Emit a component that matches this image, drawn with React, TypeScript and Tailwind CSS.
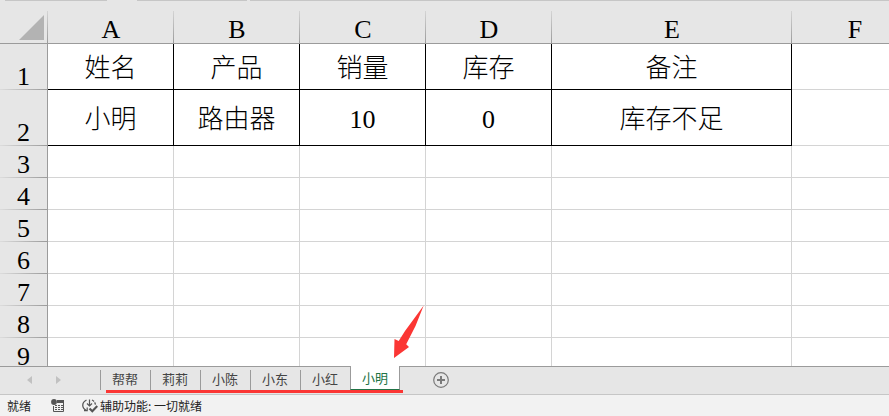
import { useState } from "react";
import clsx from "clsx";

const columns = ["A", "B", "C", "D", "E", "F"];
const sheets = ["帮帮", "莉莉", "小陈", "小东", "小红", "小明"];

const rows = [
  ["姓名", "产品", "销量", "库存", "备注"],
  ["小明", "路由器", "10", "0", "库存不足"],
  [],
  [],
  [],
  [],
  [],
  [],
  [],
];

const rowHeight = (index: number) => {
  if (index === 0) return "h-[46px]";
  if (index === 1) return "h-14";
  return "h-8";
};

function SheetGrid() {
  return (
    <div className="min-h-0 flex-1 overflow-hidden bg-white">
      <table className="w-full table-fixed border-separate border-spacing-0 font-['Liberation_Serif','Noto_Sans_CJK_SC',serif] text-[26px] leading-[26px] font-light text-black">
        <colgroup>
          <col className="w-12" />
          <col className="w-[126px]" />
          <col className="w-[126px]" />
          <col className="w-[126px]" />
          <col className="w-[126px]" />
          <col className="w-60" />
          <col />
        </colgroup>
        <thead>
          <tr className="h-[43px] bg-[#e6e6e6]">
            <th className="border-b border-[#9b9b9b] bg-[linear-gradient(to_bottom,#d4d4d4,#9b9b9b)] bg-[length:1px_32px] bg-right-bottom bg-no-repeat p-0 align-bottom">
              <button
                type="button"
                aria-label="全选"
                className="ml-auto block pr-1 pb-[3px]"
              >
                <svg width="25" height="25" viewBox="0 0 25 25" fill="#b3b3b3">
                  <path d="M25 0V25H0Z" />
                </svg>
              </button>
            </th>
            {columns.map((col) => (
              <th
                key={col}
                scope="col"
                className={clsx(
                  "border-b border-[#9b9b9b] p-0 align-bottom font-light",
                  col === "F"
                    ? "text-center"
                    : "bg-[linear-gradient(to_bottom,#d4d4d4,#9b9b9b)] bg-[length:1px_32px] bg-right-bottom bg-no-repeat"
                )}
              >
                {col === "F" ? <div className="w-[126px]">{col}</div> : col}
              </th>
            ))}
          </tr>
        </thead>
        <tbody>
          {rows.map((row, i) => (
            <tr key={i} className={rowHeight(i)}>
              <th
                scope="row"
                className="border-r border-[#9b9b9b] bg-[#e6e6e6] bg-[linear-gradient(to_right,#dcdcdc,#9b9b9b)] bg-[length:100%_1px] bg-bottom bg-no-repeat p-0 align-bottom font-light"
              >
                {i + 1}
              </th>
              {columns.map((col, j) => (
                <td
                  key={col}
                  className={clsx(
                    "border-b px-0 pt-1 pb-0 text-center align-middle",
                    col !== "F" && "border-r",
                    row[j] ? "border-black" : "border-[#d4d4d4]"
                  )}
                >
                  {row[j]}
                </td>
              ))}
            </tr>
          ))}
        </tbody>
      </table>
    </div>
  );
}

function SheetTabs() {
  const [active, setActive] = useState("小明");

  return (
    <div className="relative flex h-[29px] shrink-0 border-b border-[#c6c6c6] bg-[#e6e6e6]">
      <div className="flex w-[100px] items-center gap-6 border-t border-[#9b9b9b] pb-0.5 pl-[27px]">
        <button type="button" aria-label="上一个工作表">
          <svg width="5" height="8" viewBox="0 0 5 8" fill="#c1c1c1">
            <path d="M5 0V8L0 4Z" />
          </svg>
        </button>
        <button type="button" aria-label="下一个工作表">
          <svg width="5" height="8" viewBox="0 0 5 8" fill="#c1c1c1">
            <path d="M0 0V8L5 4Z" />
          </svg>
        </button>
      </div>

      <div role="tablist" className="relative flex text-[13px]">
        {sheets.map((name) => (
          <button
            key={name}
            type="button"
            role="tab"
            aria-selected={name === active}
            onClick={() => setActive(name)}
            className={clsx(
              "h-6 w-[50px]",
              name === active
                ? "border-x border-b border-x-[#9b9b9b] border-b-[#217346] bg-white text-[#217346]"
                : "border-t border-[#9b9b9b] bg-[linear-gradient(#9b9b9b,#9b9b9b)] bg-[length:1px_20px] bg-left-bottom bg-no-repeat text-[#444444]"
            )}
          >
            {name}
          </button>
        ))}

        {/* red marker under the tabs and the arrow to the last one */}
        <div className="absolute top-6 -right-[3px] left-1.5 h-[3px] bg-[#fb3634]" />
        <svg
          className="pointer-events-none absolute -top-[61px] -right-6 h-[54px] w-8"
          viewBox="0 0 32 54"
          fill="#fb3634"
        >
          <path d="M31.7 .5L23.5 21L14.2 39.2L17 42L2 53L2.5 34L6.7 36L13 26Z" />
        </svg>
      </div>

      <div className="flex flex-1 items-center border-t border-[#9b9b9b] pb-0.5 pl-[33px]">
        <button type="button" aria-label="新工作表">
          <svg width="16" height="16" viewBox="0 0 16 16" fill="none" stroke="#7a7a7a">
            <circle cx="8" cy="8" r="7.3" strokeWidth="1.2" />
            <path d="M8 4V12M4 8H12" strokeWidth="2" />
          </svg>
        </button>
      </div>
    </div>
  );
}

function StatusBar() {
  return (
    <footer className="flex h-[21px] shrink-0 items-center bg-[#f2f2f2] pl-[7px] text-xs text-[#222222]">
      <span>就绪</span>
      <button type="button" aria-label="宏录制" className="ml-5">
        <svg width="14" height="13" viewBox="0 0 14 13">
          <path d="M6 1.5H12.5V12.5H2.5V7" fill="none" stroke="#555" />
          <path d="M6 1H13V4H6Z" fill="#555" />
          <path
            d="M4 6.5H6M7 6.5H9M10 6.5H12M4 8.5H6M7 8.5H9M10 8.5H12M4 10.5H6M7 10.5H9M10 10.5H12"
            stroke="#555"
          />
          <circle cx="3" cy="3" r="2.9" fill="#555" />
        </svg>
      </button>
      <button type="button" className="ml-[17px] flex items-center gap-0.5">
        <svg width="16" height="15" viewBox="0 0 16 15" fill="none" stroke="#555">
          <path d="M4.5 2C-.5 4.5-.5 10 4.5 12.5" strokeWidth="1.3" />
          <path d="M2 12.7H5.2V9.5" strokeWidth="1.2" />
          <path d="M10 2C12 3 13.3 4.7 13.5 7" strokeWidth="1.3" strokeDasharray="2.5 1" />
          <path d="M7.5 1.5V7.5M5 5.5L7.5 8L10 5.5" strokeWidth="1.2" />
          <path d="M7.5 10.5L10.3 13.2L15.3 8" strokeWidth="2.2" />
        </svg>
        <span>辅助功能: 一切就绪</span>
      </button>
    </footer>
  );
}

export default function App() {
  return (
    <div className="flex h-screen flex-col overflow-hidden bg-[#e6e6e6] font-['Noto_Sans_CJK_SC',sans-serif]">
      {/* lower edge of the name box, the fx buttons and the formula box */}
      <div className="flex h-px shrink-0 pl-[5px]">
        <div className="w-[102px] bg-[#c6c6c6]" />
        <div className="ml-[30px] w-[110px] bg-[#c6c6c6]" />
        <div className="ml-[3px] flex-1 bg-[#c6c6c6]" />
      </div>
      <SheetGrid />
      <SheetTabs />
      <StatusBar />
    </div>
  );
}
